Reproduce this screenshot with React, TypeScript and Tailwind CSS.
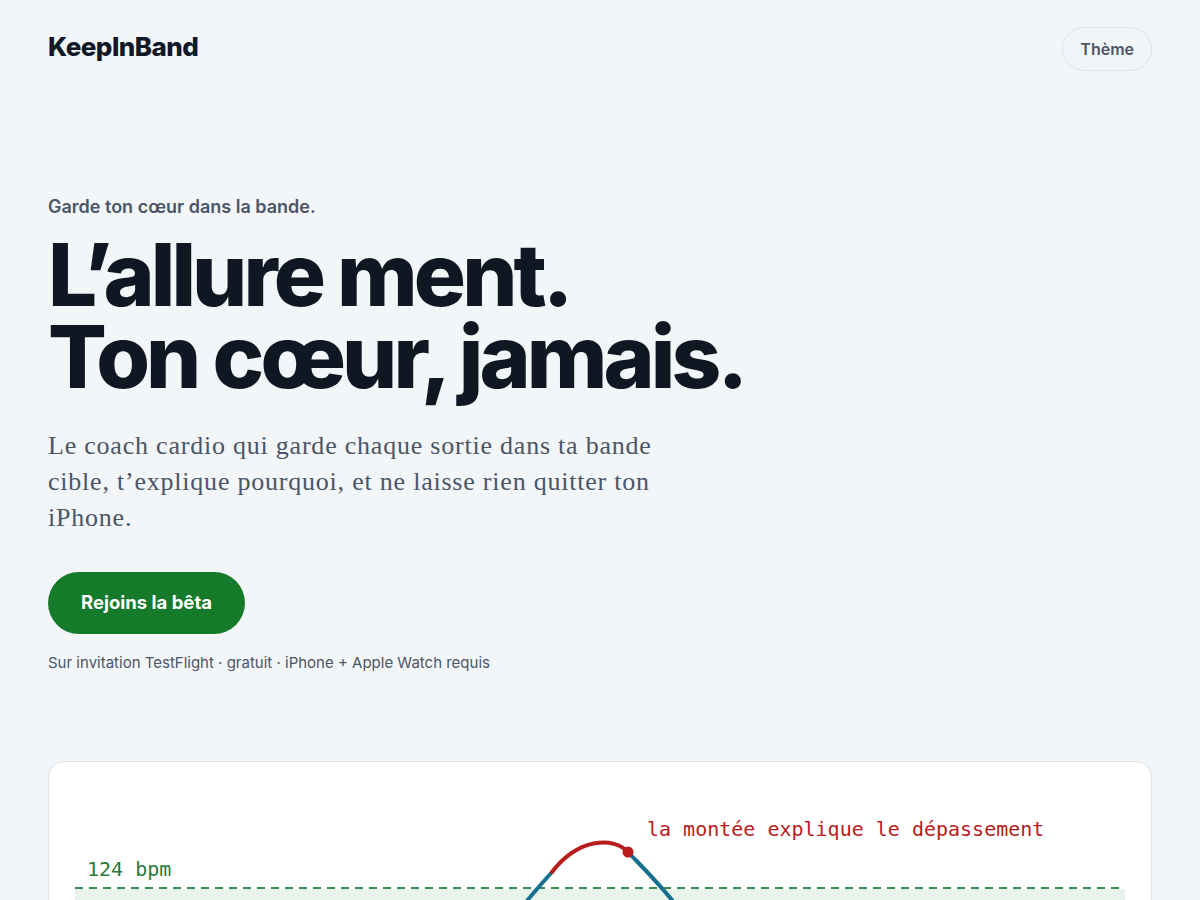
import React from "react";

const sans = { fontFamily: "Inter, 'Noto Sans', sans-serif" };
const mono = { fontFamily: "'DejaVu Sans Mono', 'Liberation Mono', monospace" };

export default function App() {
  return (
    <div className="min-h-screen bg-[#f3f6f9] text-[#0f1722]" style={sans}>
      <div className="px-12">
        <header className="flex items-center justify-between pt-[27px]">
          <div className="-mt-[6px] text-[26px] font-extrabold tracking-[-0.02em] text-[#111827]">KeepInBand</div>
          <button className="h-[44px] rounded-full border border-[#dfe4ea] px-[17px] text-[16px] font-semibold text-[#4b5565]">
            Thème
          </button>
        </header>

        <section className="mt-[122px]">
          <p className="text-[18px] font-semibold text-[#4b5565]">Garde ton cœur dans la bande.</p>
          <h1 className="mt-[14px] text-[87px] leading-[82px] font-extrabold tracking-[-0.045em] text-[#0f1722]">
            L’allure ment.
            <br />
            Ton cœur, jamais.
          </h1>
          <p
            className="mt-[30px] max-w-[640px] text-[26px] leading-[36px] tracking-[0.03em] text-[#4b5565]"
            style={{ fontFamily: "'Liberation Serif', 'DejaVu Serif', serif" }}
          >
            Le coach cardio qui garde chaque sortie dans ta bande cible, t’explique pourquoi, et ne laisse rien quitter ton iPhone.
          </p>
          <button className="mt-[36px] h-[62px] rounded-full bg-[#167a2b] px-[33px] text-[18.5px] font-bold text-white">
            Rejoins la bêta
          </button>
          <p className="mt-[18px] text-[15px] text-[#4b5565]">
            Sur invitation TestFlight · gratuit · iPhone + Apple Watch requis
          </p>
        </section>

        <div className="mt-[86px] h-[400px] overflow-hidden rounded-2xl border border-[#dde3ea] bg-white">
          <svg width="1102" height="300" viewBox="0 0 1102 300" className="block">
            <rect x="26" y="127" width="1050" height="200" fill="#e8f3ec" />
            <line x1="26" y1="126" x2="1076" y2="126" stroke="#3a8a55" strokeWidth="2" strokeDasharray="8 6" />
            <text x="38" y="114" fontSize="20" fill="#2a7a3b" style={mono}>
              124 bpm
            </text>
            <text x="598" y="74" fontSize="20" fill="#b91c1c" style={mono}>
              la montée explique le dépassement
            </text>
            <path d="M 440 185 C 460 160, 485 130, 503 110" fill="none" stroke="#17708f" strokeWidth="4" strokeLinecap="round" />
            <path d="M 579 90 C 595 107, 615 125, 660 185" fill="none" stroke="#17708f" strokeWidth="4" strokeLinecap="round" />
            <path d="M 503 110 C 530 75, 565 75, 579 90" fill="none" stroke="#b91c1c" strokeWidth="4" strokeLinecap="round" />
            <circle cx="579" cy="90" r="5.5" fill="#b91c1c" />
          </svg>
        </div>
      </div>
    </div>
  );
}
